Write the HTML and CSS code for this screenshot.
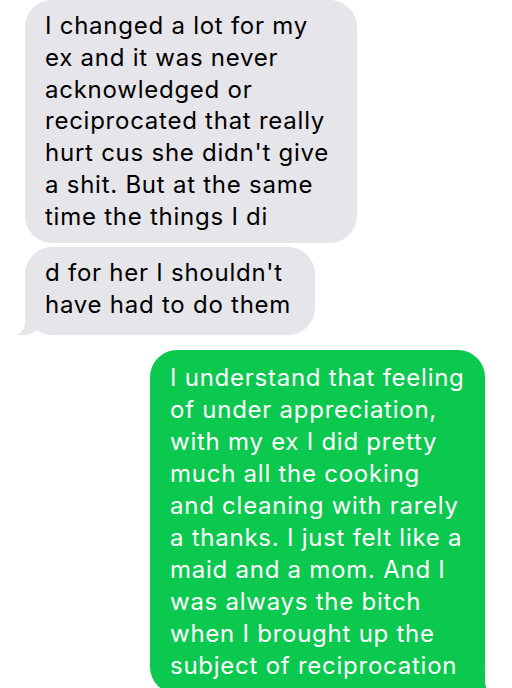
FILE: index.html
```html
<!DOCTYPE html>
<html lang="en">
  <head>
    <meta charset="UTF-8" />
    <meta name="viewport" content="width=device-width, initial-scale=1" />
    <title>Messages</title>
    <link rel="stylesheet" href="styles.css">
  </head>
  <body>
    <div class="chat">
      <div class="bubble in first">
        I changed a lot for my<br>
        ex and it was never<br>
        acknowledged or<br>
        reciprocated that really<br>
        hurt cus she didn't give<br>
        a shit. But at the same<br>
        time the things I di
      </div>
      <div class="bubble in second tail">
        d for her I shouldn't<br>
        have had to do them
      </div>
      <div class="bubble out third tail">
        I understand that feeling<br>
        of under appreciation,<br>
        with my ex I did pretty<br>
        much all the cooking<br>
        and cleaning with rarely<br>
        a thanks. I just felt like a<br>
        maid and a mom. And I<br>
        was always the bitch<br>
        when I brought up the<br>
        subject of reciprocation
      </div>
    </div>
  </body>
</html>
```

FILE: styles.css
```css
* {
  box-sizing: border-box;
  margin: 0;
  padding: 0;
}
body {
  font-family: Inter, "Liberation Sans", Arial, sans-serif;
  background: #fff;
  color: #000;
  overflow: hidden;
}
.chat {
  display: flex;
  flex-direction: column;
  padding: 0 27px 0 25px;
}
.bubble {
  position: relative;
  padding: 10px 20px;
  border-radius: 27px;
  font-size: 24px;
  line-height: 31.8px;
  letter-spacing: 0.75px;
  white-space: nowrap;
}
.in {
  align-self: flex-start;
  background: #e5e5ea;
  color: #000;
}
.out {
  align-self: flex-end;
  background: #0bc84e;
  color: #fff;
}
.first {
  width: 332px;
  height: 243px;
}
.second {
  width: 290px;
  height: 88px;
  margin-top: 4px;
}
.third {
  width: 335px;
  margin-top: 15px;
  padding-top: 12px;
  padding-bottom: 12px;
  line-height: 32px;
}

/* little tails at the bottom corner */
.tail::before,
.tail::after {
  content: "";
  position: absolute;
  bottom: 0;
  height: 24px;
}
.in.tail::before {
  left: -7px;
  width: 22px;
  background: #e5e5ea;
  border-bottom-right-radius: 16px 14px;
}
.in.tail::after {
  left: -26px;
  width: 26px;
  background: #fff;
  border-bottom-right-radius: 12px;
}
.out.tail::before {
  right: -7px;
  width: 22px;
  background: #0bc84e;
  border-bottom-left-radius: 16px 14px;
}
.out.tail::after {
  right: -26px;
  width: 26px;
  background: #fff;
  border-bottom-left-radius: 12px;
}
```
